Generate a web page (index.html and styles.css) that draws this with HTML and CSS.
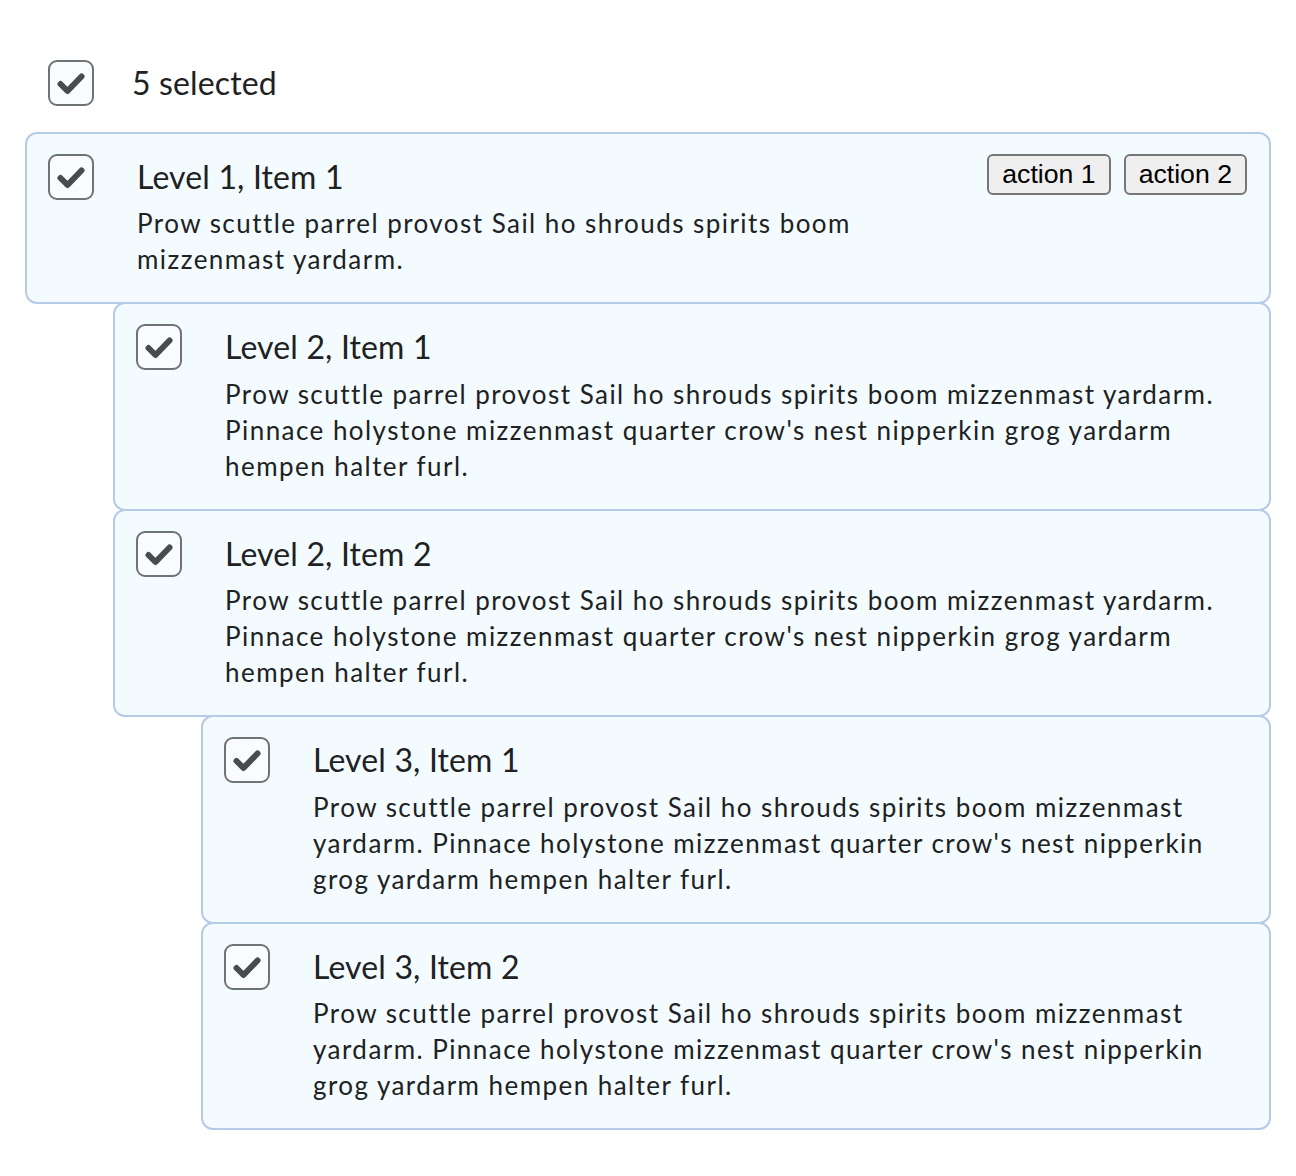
FILE: index.html
```html
<!DOCTYPE html>
<html lang="en">
<head>
<meta charset="utf-8">
<title>List</title>
<link rel="stylesheet" href="styles.css">
</head>
<body>
<div class="page">
  <div class="header">
    <span class="checkbox"><svg viewBox="0 0 46 46" width="46" height="46"><path d="M12.5 24 L19.5 31 L33.5 16.5" /></svg></span>
    <span class="header-text">5 selected</span>
  </div>

  <ul class="list">
    <li class="item">
      <div class="card">
        <span class="checkbox"><svg viewBox="0 0 46 46" width="46" height="46"><path d="M12.5 24 L19.5 31 L33.5 16.5" /></svg></span>
        <div class="content">
          <div class="title">Level 1, Item 1</div>
          <div class="desc">Prow scuttle parrel provost Sail ho shrouds spirits boom mizzenmast yardarm.</div>
        </div>
        <div class="actions">
          <button class="btn">action 1</button>
          <button class="btn">action 2</button>
        </div>
      </div>
      <ul class="list nested">
        <li class="item">
          <div class="card">
            <span class="checkbox"><svg viewBox="0 0 46 46" width="46" height="46"><path d="M12.5 24 L19.5 31 L33.5 16.5" /></svg></span>
            <div class="content">
              <div class="title">Level 2, Item 1</div>
              <div class="desc">Prow scuttle parrel provost Sail ho shrouds spirits boom mizzenmast yardarm. Pinnace holystone mizzenmast quarter crow's nest nipperkin grog yardarm hempen halter furl.</div>
            </div>
          </div>
        </li>
        <li class="item">
          <div class="card">
            <span class="checkbox"><svg viewBox="0 0 46 46" width="46" height="46"><path d="M12.5 24 L19.5 31 L33.5 16.5" /></svg></span>
            <div class="content">
              <div class="title">Level 2, Item 2</div>
              <div class="desc">Prow scuttle parrel provost Sail ho shrouds spirits boom mizzenmast yardarm. Pinnace holystone mizzenmast quarter crow's nest nipperkin grog yardarm hempen halter furl.</div>
            </div>
          </div>
          <ul class="list nested">
            <li class="item">
              <div class="card">
                <span class="checkbox"><svg viewBox="0 0 46 46" width="46" height="46"><path d="M12.5 24 L19.5 31 L33.5 16.5" /></svg></span>
                <div class="content">
                  <div class="title">Level 3, Item 1</div>
                  <div class="desc">Prow scuttle parrel provost Sail ho shrouds spirits boom mizzenmast yardarm. Pinnace holystone mizzenmast quarter crow's nest nipperkin grog yardarm hempen halter furl.</div>
                </div>
              </div>
            </li>
            <li class="item">
              <div class="card">
                <span class="checkbox"><svg viewBox="0 0 46 46" width="46" height="46"><path d="M12.5 24 L19.5 31 L33.5 16.5" /></svg></span>
                <div class="content">
                  <div class="title">Level 3, Item 2</div>
                  <div class="desc">Prow scuttle parrel provost Sail ho shrouds spirits boom mizzenmast yardarm. Pinnace holystone mizzenmast quarter crow's nest nipperkin grog yardarm hempen halter furl.</div>
                </div>
              </div>
            </li>
          </ul>
        </li>
      </ul>
    </li>
  </ul>
</div>
</body>
</html>
```

FILE: styles.css
```css
html, body {
  margin: 0;
  padding: 0;
  background: #ffffff;
}

body {
  font-family: Lato, "Noto Sans", sans-serif;
  color: #202122;
}

.page {
  padding: 60px 25px 0 25px;
  width: 1246px;
}

.header {
  display: flex;
  align-items: center;
  padding-left: 23px;
  margin-bottom: 26px;
}

.header-text {
  font-size: 32px;
  margin-left: 38px;
  line-height: 38px;
  letter-spacing: 0.15px;
}

.checkbox {
  flex: none;
  box-sizing: border-box;
  width: 46px;
  height: 46px;
  border: 2px solid #6e7376;
  border-radius: 9px;
  background: #f9fbff;
  display: flex;
  align-items: center;
  justify-content: center;
  overflow: hidden;
}

.checkbox svg {
  display: block;
  flex: none;
  margin: -2px;
}

.checkbox path {
  fill: none;
  stroke: #494c4e;
  stroke-width: 6;
  stroke-linecap: round;
  stroke-linejoin: round;
}

.list {
  list-style: none;
  margin: 0;
  padding: 0;
}

.nested {
  margin-left: 88px;
}

.item {
  margin: 0;
  padding: 0;
}

.card {
  display: flex;
  align-items: flex-start;
  background: #f3fbff;
  border: 2px solid #b6cbe8;
  border-radius: 12px;
  padding: 20px 22px 25px 21px;
  margin-top: -2px;
  position: relative;
}

.list > .item:first-child > .card {
  margin-top: 0;
}

.nested > .item:first-child > .card {
  margin-top: -2px;
}

.content {
  flex: 1 1 auto;
  min-width: 0;
  margin-left: 43px;
  padding-top: 4px;
}

.title {
  font-size: 32px;
  line-height: 38.4px;
  letter-spacing: 0.15px;
}

.desc {
  font-size: 26px;
  letter-spacing: 1.45px;
  line-height: 36px;
  margin-top: 9px;
}

.actions {
  flex: none;
  display: flex;
  gap: 13px;
  margin-left: 24px;
}

.btn {
  box-sizing: border-box;
  height: 41px;
  font-family: "Liberation Sans", Arial, sans-serif;
  font-size: 26.67px;
  line-height: 1;
  color: #000000;
  background: #efefef;
  border: 2px solid #767676;
  border-radius: 6px;
  padding: 0 13px;
}
```
